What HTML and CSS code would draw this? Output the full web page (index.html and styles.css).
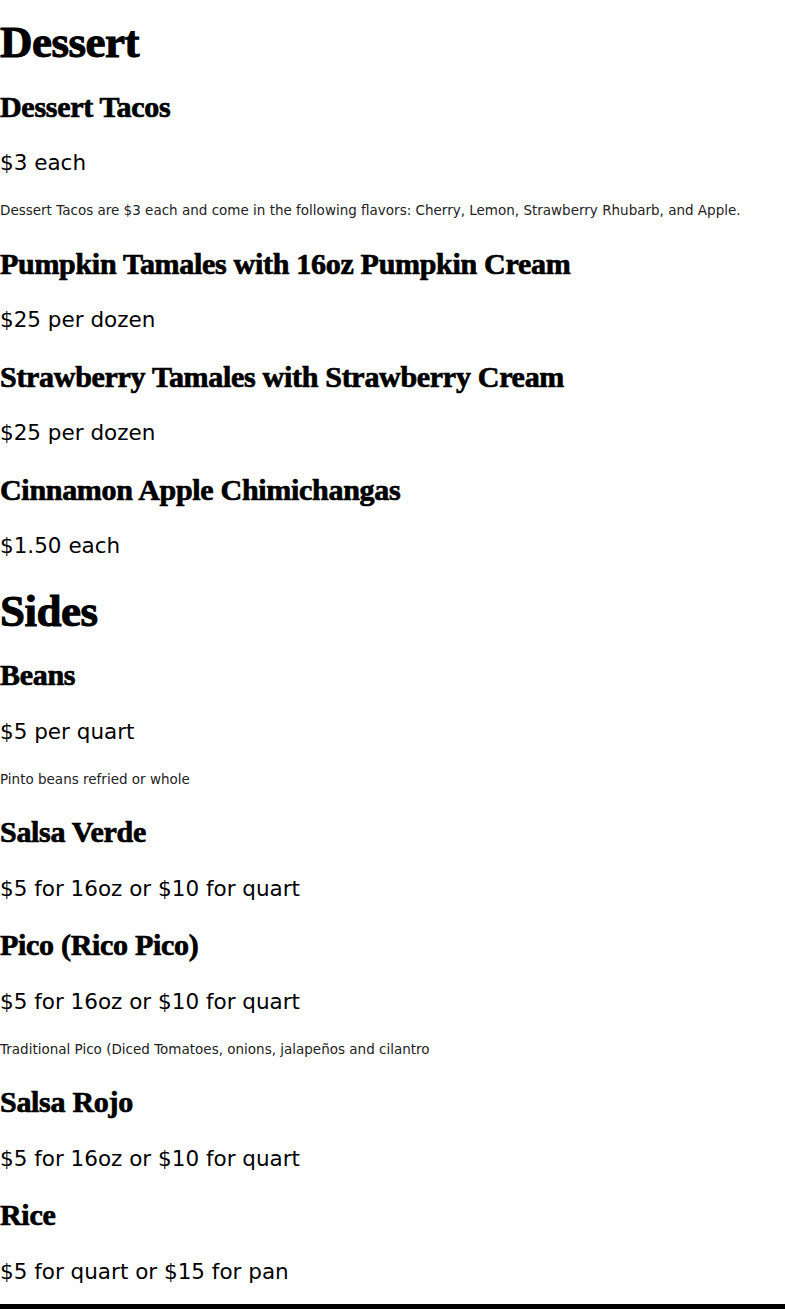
FILE: index.html
```html
<!DOCTYPE html>
<html lang="en">
<head>
<meta charset="utf-8">
<title>Menu</title>
<link rel="stylesheet" href="styles.css">
</head>
<body>
<main class="menu">
  <section class="section">
    <h2>Dessert</h2>
    <div class="item">
      <h3>Dessert Tacos</h3>
      <p class="price">$3 each</p>
      <p class="desc">Dessert Tacos are $3 each and come in the following flavors: Cherry, Lemon, Strawberry Rhubarb, and Apple.</p>
    </div>
    <div class="item">
      <h3>Pumpkin Tamales with 16oz Pumpkin Cream</h3>
      <p class="price">$25 per dozen</p>
    </div>
    <div class="item">
      <h3>Strawberry Tamales with Strawberry Cream</h3>
      <p class="price">$25 per dozen</p>
    </div>
    <div class="item">
      <h3>Cinnamon Apple Chimichangas</h3>
      <p class="price">$1.50 each</p>
    </div>
  </section>
  <section class="section">
    <h2>Sides</h2>
    <div class="item">
      <h3>Beans</h3>
      <p class="price">$5 per quart</p>
      <p class="desc">Pinto beans refried or whole</p>
    </div>
    <div class="item">
      <h3>Salsa Verde</h3>
      <p class="price">$5 for 16oz or $10 for quart</p>
    </div>
    <div class="item">
      <h3>Pico (Rico Pico)</h3>
      <p class="price">$5 for 16oz or $10 for quart</p>
      <p class="desc">Traditional Pico (Diced Tomatoes, onions, jalapeños and cilantro</p>
    </div>
    <div class="item">
      <h3>Salsa Rojo</h3>
      <p class="price">$5 for 16oz or $10 for quart</p>
    </div>
    <div class="item">
      <h3>Rice</h3>
      <p class="price">$5 for quart or $15 for pan</p>
    </div>
  </section>
</main>
<footer class="footer"></footer>
</body>
</html>
```

FILE: styles.css
```css
html, body {
  margin: 0;
  padding: 0;
  background: #fff;
  color: #000;
}

.menu {
  padding: 16px 0 17.5px;
}

.section h2 {
  font-family: "Liberation Serif", "Times New Roman", serif;
  font-weight: 700;
  font-size: 45px;
  line-height: 52px;
  margin: 0 0 20.5px;
  letter-spacing: -0.5px;
  -webkit-text-stroke: 1px #000;
}

.item {
  margin-bottom: 23.5px;
}

.section:last-child .item:last-child {
  margin-bottom: 0;
}

.item h3 {
  font-family: "Liberation Serif", "Times New Roman", serif;
  font-weight: 700;
  font-size: 30px;
  line-height: 36px;
  margin: 0 0 23.5px;
  letter-spacing: -0.3px;
  -webkit-text-stroke: 0.7px #000;
}

.price {
  font-family: "DejaVu Sans", sans-serif;
  font-size: 21.5px;
  line-height: 30px;
  margin: 0;
  color: #000;
}

.desc {
  font-family: "DejaVu Sans", sans-serif;
  font-size: 13.5px;
  line-height: 20px;
  margin: 22px 0 0;
  padding-bottom: 2px;
  color: #222;
}

.footer {
  height: 40px;
  background: #000;
}
```
